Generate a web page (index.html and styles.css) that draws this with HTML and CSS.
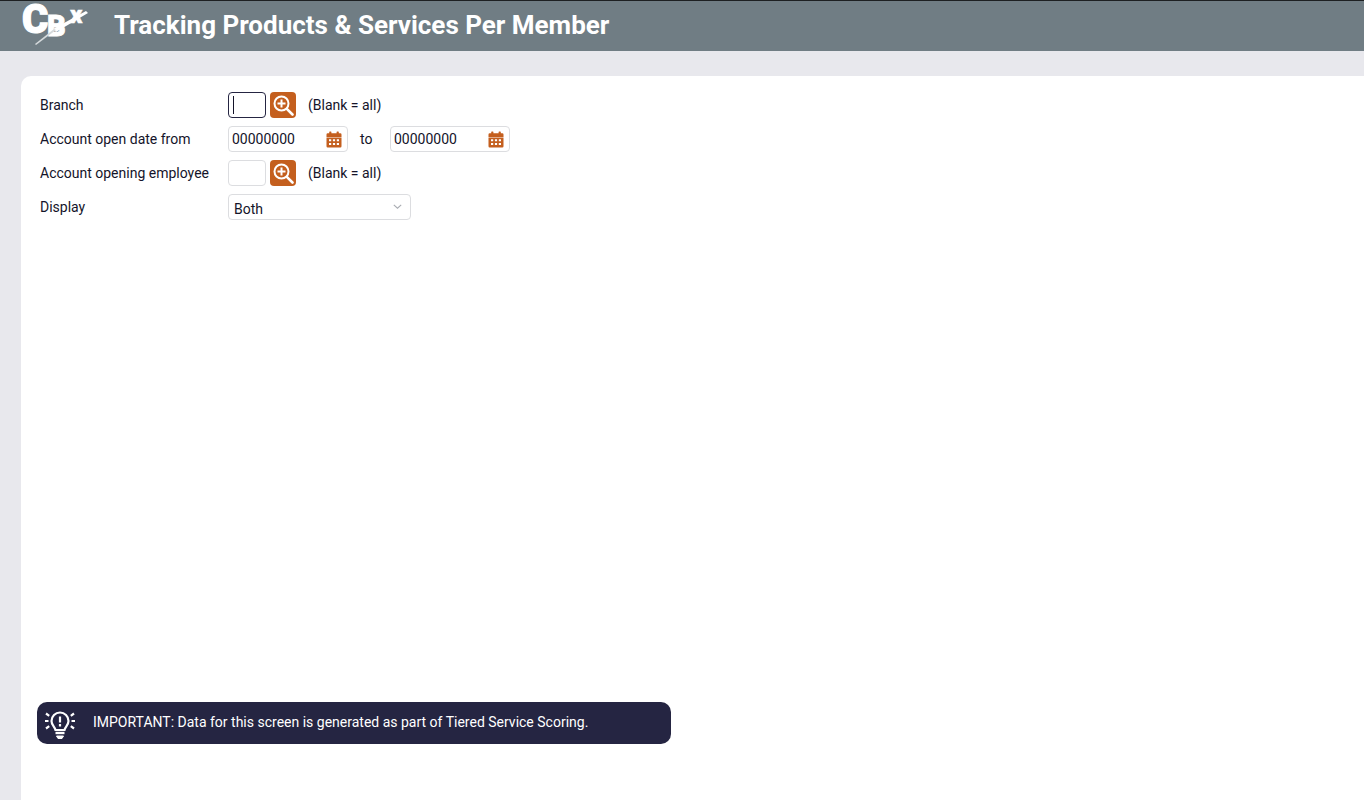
FILE: index.html
```html
<!DOCTYPE html>
<html lang="en">
<head>
<meta charset="utf-8">
<title>Tracking Products &amp; Services Per Member</title>
<link rel="stylesheet" href="styles.css">
</head>
<body>
<header class="topbar">
  <svg class="logo" width="72" height="50" viewBox="0 0 72 50" aria-hidden="true">
    <text class="logo-text" y="32"><tspan x="2" class="logo-c">C</tspan><tspan x="27" y="35" class="logo-b">B</tspan><tspan x="50" y="22" class="logo-x">x</tspan></text>
    <path d="M33 28 L66 10 L68 12 L36 31 Z" fill="#fff"/>
    <path d="M15 43 L34 28 L36 29 L16 44 Z" fill="#d5dadc"/>
  </svg>
  <h1 class="title">Tracking Products &amp; Services Per Member</h1>
</header>
<main class="panel">
  <form class="form">
    <div class="row">
      <label class="label">Branch</label>
      <div class="field small focus"><span class="caret"></span></div>
      <button type="button" class="lookup"><svg width="22" height="22" viewBox="0 0 22 22"><use href="#zoom"/></svg></button>
      <span class="hint">(Blank = all)</span>
    </div>
    <div class="row">
      <label class="label">Account open date from</label>
      <div class="field date"><span>00000000</span><svg width="16" height="17" viewBox="0 0 16 17"><use href="#cal"/></svg></div>
      <span class="to">to</span>
      <div class="field date"><span>00000000</span><svg width="16" height="17" viewBox="0 0 16 17"><use href="#cal"/></svg></div>
    </div>
    <div class="row">
      <label class="label">Account opening employee</label>
      <div class="field small"></div>
      <button type="button" class="lookup"><svg width="22" height="22" viewBox="0 0 22 22"><use href="#zoom"/></svg></button>
      <span class="hint">(Blank = all)</span>
    </div>
    <div class="row">
      <label class="label label-top">Display</label>
      <div class="field select"><span class="select-value">Both</span>
        <svg width="9" height="5" viewBox="0 0 9 5"><path d="M.8 .8 L4.5 4.2 L8.2 .8" fill="none" stroke="#a9acb2" stroke-width="1.1"/></svg>
      </div>
    </div>
  </form>
  <div class="notice">
    <svg class="bulb" width="30" height="30" viewBox="0 0 30 30" fill="none" stroke="#fff" stroke-width="2.2">
      <path d="M10.5 19 C10 16 6.5 14.5 6.5 10 A8.5 8.5 0 0 1 23.5 10 C23.5 14.5 20 16 19.5 19 Z"/>
      <path d="M15 5.5 V11.5 M15 13 V15.5"/>
      <path d="M10.5 22 H19.5" stroke-width="2.4"/>
      <path d="M11.5 25 H18.5 L17 27.5 H13 Z" fill="#fff" stroke-width="1"/>
      <path d="M0 10 H3.5 M26.5 10 H30 M1 2.5 L4.2 4.8 M29 2.5 L25.8 4.8 M1 17.5 L4.2 15.2 M29 17.5 L25.8 15.2"/>
    </svg>
    <span class="notice-text">IMPORTANT: Data for this screen is generated as part of Tiered Service Scoring.</span>
  </div>
</main>
<svg class="defs" width="0" height="0" aria-hidden="true">
  <defs>
    <g id="zoom">
      <circle cx="9.5" cy="9.5" r="7" fill="none" stroke="#fff" stroke-width="2"/>
      <path d="M9.5 5.5 V13.5 M5.5 9.5 H13.5" stroke="#fff" stroke-width="2"/>
      <path d="M14.8 14.8 L20.5 20.5" stroke="#fff" stroke-width="2.6" stroke-linecap="round"/>
    </g>
    <g id="cal" fill="#c45f1e">
      <path d="M.5 3.5 a1.2 1.2 0 0 1 1.2 -1.2 H14.3 a1.2 1.2 0 0 1 1.2 1.2 V6 H.5 Z"/>
      <rect x="3.2" y=".5" width="2.2" height="3.5" rx=".6"/>
      <rect x="10.6" y=".5" width="2.2" height="3.5" rx=".6"/>
      <path fill-rule="evenodd" d="M.5 6.5 H15.5 V15.3 a1.2 1.2 0 0 1 -1.2 1.2 H1.7 a1.2 1.2 0 0 1 -1.2 -1.2 Z M3 8.2 V10.2 H5.2 V8.2 Z M6.9 8.2 V10.2 H9.1 V8.2 Z M10.8 8.2 V10.2 H13 V8.2 Z M3 12 V14 H5.2 V12 Z M6.9 12 V14 H9.1 V12 Z M10.8 12 V14 H13 V12 Z"/>
    </g>
  </defs>
</svg>
</body>
</html>
```
FILE: styles.css
```css
* { box-sizing: border-box; }
html, body { height: 100%; }
body {
  margin: 0;
  background: #e8e8ed;
  font-family: Roboto, "Liberation Sans", sans-serif;
  font-size: 14px;
  color: #14142a;
  overflow: hidden;
  display: flex;
  flex-direction: column;
}
.topbar {
  height: 51px;
  flex: none;
  background: #707d84;
  border-top: 1px solid #1d2022;
  display: flex;
  align-items: center;
  padding-left: 20px;
}
.logo { flex: none; }
.logo-text { font-family: Roboto, sans-serif; font-weight: 900; fill: #fff; stroke: #fff; }
.logo-c { font-size: 40px; stroke-width: 1.2px; }
.logo-b { font-size: 29px; stroke-width: .8px; }
.logo-x { font-size: 24px; stroke-width: .5px; }
.title {
  margin: -2px 0 0 22px;
  font-size: 26px;
  font-weight: 700;
  color: #fff;
}
.panel {
  flex: 1;
  margin: 25px 0 0 21px;
  background: #fff;
  border-top-left-radius: 10px;
  padding: 16px 0 0 16px;
  display: flex;
  flex-direction: column;
}
.form { display: flex; flex-direction: column; gap: 8px; }
.row { display: flex; align-items: center; height: 26px; }
.label { width: 188px; margin-left: 3px; flex: none; }
.label-top { align-self: flex-start; padding-top: 5px; }
.field {
  height: 26px;
  background: #fff;
  border: 1px solid #dcdde0;
  border-radius: 4px;
  display: flex;
  align-items: center;
  padding: 0 3px;
}
.small { width: 38px; }
.focus { border-color: #252542; }
.caret { width: 1px; height: 18px; background: #14142a; margin-left: 1px; }
.lookup {
  width: 26px;
  height: 26px;
  margin-left: 4px;
  padding: 2px;
  border: 0;
  border-radius: 4px;
  background: #c45f1e;
  display: flex;
  align-items: center;
  justify-content: center;
}
.hint { margin-left: 12px; }
.date { width: 120px; justify-content: space-between; padding-right: 5px; }
.to { width: 42px; padding-left: 12px; }
.select {
  width: 183px;
  justify-content: space-between;
  padding: 4px 8px 0 5px;
}
.select svg { margin-top: -5px; }
.notice {
  margin-top: 482px;
  width: 634px;
  height: 42px;
  background: #252542;
  border-radius: 10px;
  color: #fff;
  display: flex;
  align-items: center;
  padding-left: 8px;
  gap: 18px;
}
.bulb { flex: none; margin-top: 5px; }
.notice-text { margin-top: -2px; }
.defs { position: absolute; }
```
